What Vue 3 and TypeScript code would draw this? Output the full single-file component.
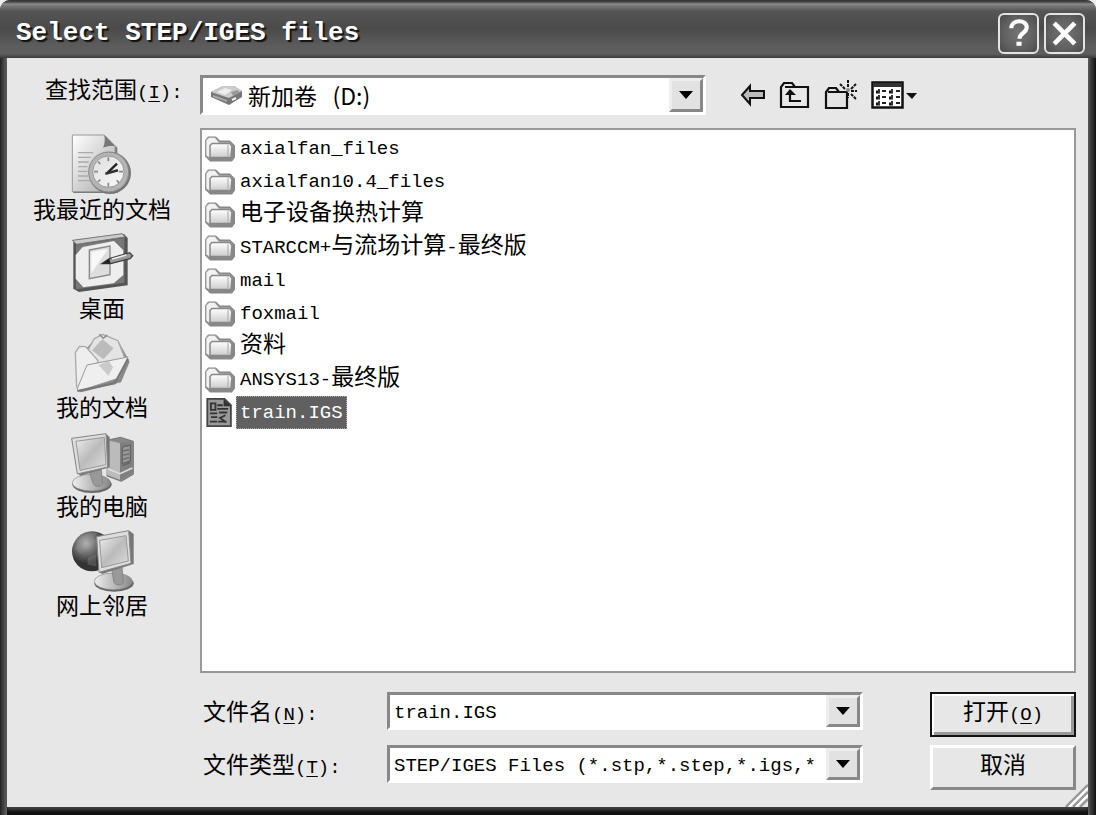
<script setup lang="ts">
import { ref } from 'vue'

interface Entry {
  name: string
  kind: 'folder' | 'file'
}

interface Run {
  text: string
  wide: boolean
}

const entries: Entry[] = [
  { name: 'axialfan_files', kind: 'folder' },
  { name: 'axialfan10.4_files', kind: 'folder' },
  { name: '电子设备换热计算', kind: 'folder' },
  { name: 'STARCCM+与流场计算-最终版', kind: 'folder' },
  { name: 'mail', kind: 'folder' },
  { name: 'foxmail', kind: 'folder' },
  { name: '资料', kind: 'folder' },
  { name: 'ANSYS13-最终版', kind: 'folder' },
  { name: 'train.IGS', kind: 'file' },
]

const places = [
  { id: 'recent', label: '我最近的文档' },
  { id: 'desktop', label: '桌面' },
  { id: 'documents', label: '我的文档' },
  { id: 'computer', label: '我的电脑' },
  { id: 'network', label: '网上邻居' },
]

const selected = ref('train.IGS')
const fileName = ref('train.IGS')

// Splits a name into Chinese and Latin runs, which are set at different sizes.
function runs(name: string): Run[] {
  return (name.match(/[\u4e00-\u9fff]+|[^\u4e00-\u9fff]+/g) ?? []).map((text) => ({
    text,
    wide: /[\u4e00-\u9fff]/.test(text),
  }))
}

function pick(entry: Entry) {
  selected.value = entry.name
  if (entry.kind === 'file') fileName.value = entry.name
}
</script>

<template>
  <div class="window">
    <header class="titlebar">
      <h1>Select STEP/IGES files</h1>
      <button class="caption" type="button" aria-label="Help">
        <svg viewBox="0 0 36 36"><path d="M11 13c0-9 15-9 15-1 0 6-7 5-7 11" fill="none" stroke="#fff" stroke-width="4" /><rect x="16" y="26" width="5" height="4" fill="#fff" /></svg>
      </button>
      <button class="caption" type="button" aria-label="Close">
        <svg viewBox="0 0 36 36"><path d="M8 8L28 28M28 8L8 28" fill="none" stroke="#fff" stroke-width="4.5" /></svg>
      </button>
    </header>

    <main class="body">
      <label class="look-label" for="look-in"><span class="cjk">查找范围</span>(<u>I</u>):</label>
      <div class="toolbar">
        <div class="combo look">
          <svg class="drive" viewBox="0 0 34 22">
            <path d="M1 8l12-6h11l8 5v6l-13 8L1 13z" fill="#777" />
            <path d="M1 8l12-6h11l8 5-13 7z" fill="#ccc" />
            <path d="M7 8l8-4 7 2-7 5z" fill="#eee" />
            <path d="M21 8l6-2 3 2-7 4z" fill="#999" />
            <path d="M3 11l14 5v2L3 13z" fill="#aaa" />
            <path d="M22 16l4-2" stroke="#eee" stroke-width="2" />
          </svg>
          <select id="look-in" class="cjk">
            <option>新加卷&nbsp;&nbsp; (D:)</option>
          </select>
          <span class="arrow"><svg viewBox="0 0 14 8"><path d="M0 0h14L7 8z" /></svg></span>
        </div>
        <div class="tools">
          <button type="button" aria-label="Back">
            <svg width="26" height="26" viewBox="0 0 26 26"><path d="M2 13l8-9v5h14v7H10v6z" fill="#bbb" stroke="#111" stroke-width="2" /></svg>
          </button>
          <button type="button" aria-label="Up one level">
            <svg width="32" height="28" viewBox="0 0 32 28"><path d="M2 26V6l3-4h8l3 4h13v20z" fill="#e8e8e8" stroke="#111" stroke-width="2.2" /><path d="M6 6h10" stroke="#111" stroke-width="2" /><path d="M11 11v9h11" fill="none" stroke="#111" stroke-width="2.2" /><path d="M6 14l5-6 6 6z" fill="#111" /></svg>
          </button>
          <button type="button" aria-label="New folder">
            <svg width="34" height="32" viewBox="0 0 34 32"><path d="M2 29V13l3-4h7l3 4h8v16z" fill="#e4e4e4" stroke="#111" stroke-width="2.2" /><path d="M4 13h12" stroke="#111" stroke-width="2" /><path d="M24 1v7M24 14v5M16 5l5 5M32 5l-5 5M27 12h6M27 15l5 5" fill="none" stroke="#111" stroke-width="2" stroke-dasharray="3 1" /><circle cx="24" cy="11" r="2" fill="#888" /></svg>
          </button>
          <button type="button" aria-label="View menu">
            <svg width="46" height="28" viewBox="0 0 46 28"><path d="M1.500 1.500h30v25h-30z" fill="#fff" stroke="#111" stroke-width="2.500" /><path d="M2 2h29v4H2z" fill="#333" /><path d="M5 11h4M5 17h4M5 23h4M18 11h4M18 17h4M18 23h4" stroke="#111" stroke-width="3" /><path d="M8 8v4M8 14v4M8 20v4M21 8v4M21 14v4M21 20v4" stroke="#333" stroke-width="2" /><path d="M11 10h4M11 16h4M11 22h4M25 10h4M25 16h4M25 22h4" stroke="#222" stroke-width="2" /><path d="M35 12h11l-5 6z" fill="#111" /></svg>
          </button>
        </div>
      </div>

      <nav class="places">
        <button v-for="place in places" :key="place.id" class="place" type="button">
          <svg v-if="place.id === 'recent'" viewBox="150 21 192 192">
            <defs>
              <linearGradient id="paper" x1="0" y1="0" x2="1" y2="1"><stop offset="0" stop-color="#fff" /><stop offset="1" stop-color="#aaa" /></linearGradient>
              <linearGradient id="face" x1="0" y1="0" x2="1" y2="1"><stop offset="0" stop-color="#ddd" /><stop offset="1" stop-color="#fafafa" /></linearGradient>
            </defs>
            <path d="M160 34h98l34 34v136H160z" fill="#777" />
            <path d="M157 30h96l32 34v136H157z" fill="url(#paper)" stroke="#999" stroke-width="3" />
            <path d="M252 30c4 12 3 26-3 38 12-5 24-6 36-4z" fill="#777" />
            <path d="M174 83h46M174 97h38M174 111h32M174 125h28M174 139h28M174 153h30M174 167h38" stroke="#aaa" stroke-width="4" />
            <circle cx="270" cy="144" r="63" fill="#777" />
            <circle cx="266" cy="141" r="60" fill="#b4b4b4" stroke="#888" stroke-width="3" />
            <circle cx="265" cy="140" r="47" fill="url(#face)" stroke="#999" stroke-width="3" />
            <path d="M265 97v12M265 173v12M222 140h12M297 140h12M234 110l7 7M290 166l7 7M234 171l7-7" stroke="#888" stroke-width="5" />
            <path d="M263 143l28-27" stroke="#222" stroke-width="7" /><path d="M256 146l38-10" stroke="#333" stroke-width="8" />
          </svg>
          <svg v-else-if="place.id === 'desktop'" viewBox="150 318 192 192">
            <path d="M160 350l152-23 11 12v142l-146 20-17-10z" fill="#555" />
            <path d="M157 346l150-20 8 10-145 22z" fill="#ccc" stroke="#777" stroke-width="3" />
            <path d="M168 359l145-20v134l-145 20z" fill="#777" />
            <path d="M188 366l94-18 28 28v74l-29 25-91 12-23-26v-71z" fill="#eee" />
            <path d="M208 375l62-12v86l-62 12z" fill="#ddd" stroke="#888" stroke-width="4" />
            <path d="M214 381l50-9-50 73z" fill="#f8f8f8" />
            <path d="M246 416l22-15 61-18 9 9-8 9-58 15z" fill="#999" stroke="#444" stroke-width="4" />
            <path d="M246 416l22-15 4 15z" fill="#222" /><path d="M276 402l43-12" stroke="#eee" stroke-width="4" />
          </svg>
          <svg v-else-if="place.id === 'documents'" viewBox="150 15 192 192">
            <path d="M174 194l-3-100 10-28 20 2 14-15 35-23 46 20 28 51 5 9-26 62-120 30z" fill="#888" />
            <path d="M202 79l20-37 26-14 46 19 20 51-33 52-66-4z" fill="#e4e4e4" stroke="#aaa" stroke-width="4" />
            <path d="M247 43l34 27-31 33-34-27z" fill="#bbb" /><path d="M238 28l12 12 12-10" fill="none" stroke="#888" stroke-width="4" />
            <path d="M166 83l12-19 19 1 37 42-16 51-40 34-8-6z" fill="#eee" stroke="#aaa" stroke-width="4" />
            <path d="M171 193l30-73 123-24-27 63-120 39z" fill="#efefef" stroke="#999" stroke-width="3" />
            <path d="M236 120l30-12 13 19-14 25z" fill="#bbb" opacity=".7" />
            <path d="M172 198l112-23 40-74" fill="none" stroke="#777" stroke-width="6" />
          </svg>
          <svg v-else-if="place.id === 'computer'" viewBox="150 12 192 192">
            <defs>
              <linearGradient id="screen" x1="0" y1="0" x2="1" y2="1"><stop offset="0" stop-color="#eee" /><stop offset=".5" stop-color="#bbb" /><stop offset="1" stop-color="#ddd" /></linearGradient>
              <linearGradient id="stand"><stop offset="0" stop-color="#eee" /><stop offset="1" stop-color="#888" /></linearGradient>
            </defs>
            <path d="M264 45l38-8 38 12v99l-36 21-43-16z" fill="#888" stroke="#777" stroke-width="3" />
            <path d="M264 46l36 9v109l-39-14z" fill="#bbb" /><path d="M300 54l37-6v98l-37 19z" fill="#808080" />
            <path d="M307 66l24-6v48l-24 8zM307 122l24-9" fill="#999" stroke="#666" stroke-width="4" /><path d="M310 78l17-4M310 91l17-5M310 103l17-5" stroke="#666" stroke-width="4" />
            <path d="M264 132l36 14 37-17" stroke="#ddd" stroke-width="5" fill="none" />
            <ellipse cx="216" cy="178" rx="59" ry="26" fill="#666" /><ellipse cx="214" cy="173" rx="57" ry="25" fill="url(#stand)" stroke="#888" stroke-width="2" />
            <path d="M207 139l37-5 4 42c-8 12-23 9-28 0z" fill="#999" stroke="#777" stroke-width="2" />
            <path d="M155 41l104-14 10 10v90l-88 25-9-9z" fill="#777" />
            <path d="M155 40l103-14 5 100-91 21z" fill="#ddd" stroke="#888" stroke-width="3" />
            <path d="M168 49l85-12 5 82-78 17z" fill="url(#screen)" stroke="#999" stroke-width="3" />
          </svg>
          <svg v-else viewBox="150 309 192 192">
            <defs><radialGradient id="globe" cx=".35" cy=".3"><stop offset="0" stop-color="#bbb" /><stop offset=".45" stop-color="#777" /><stop offset="1" stop-color="#333" /></radialGradient></defs>
            <circle cx="216" cy="379" r="60" fill="url(#globe)" />
            <path d="M178 340c15-15 34-20 54-15l-12 13 10 13-28 12-19 23-18-13zM204 399l25-11v36l-27-5z" fill="#999" opacity=".3" />
            <ellipse cx="282" cy="475" rx="59" ry="25" fill="#666" /><ellipse cx="280" cy="469" rx="57" ry="25" fill="url(#stand)" stroke="#888" stroke-width="2" />
            <path d="M274 429l32-6 4 49c-8 12-23 9-28 0z" fill="#999" stroke="#777" stroke-width="2" />
            <path d="M230 336l98-19 13 10v90l-95 30-9-7z" fill="#777" />
            <path d="M230 335l96-18 7 98-96 27z" fill="#ddd" stroke="#888" stroke-width="3" />
            <path d="M239 346l79-14 7 76-80 20z" fill="url(#screen)" stroke="#999" stroke-width="3" />
          </svg>
          <span>{{ place.label }}</span>
        </button>
      </nav>

      <ul class="files">
        <li v-for="entry in entries" :key="entry.name">
          <button class="entry" type="button" :class="{ selected: entry.name === selected }" @click="pick(entry)">
            <svg v-if="entry.kind === 'folder'" viewBox="0 0 32 28">
              <defs><linearGradient id="front" x1="0" y1="0" x2="0" y2="1"><stop offset="0" stop-color="#fff" /><stop offset="1" stop-color="#ccc" /></linearGradient></defs>
              <path d="M5 26L1 22V6l3-4h8l4 4h10l5 5v12l-3 4H6z" fill="#888" />
              <path d="M2 21V6l3-3h6l4 5h11l2 3-2 12H5z" fill="#f2f2f2" stroke="#aaa" />
              <path d="M6 11l2-2h18l2 3-1 11H6z" fill="url(#front)" stroke="#888" stroke-width="1.500" />
              <path d="M24 10v12" stroke="#aaa" />
            </svg>
            <svg v-else viewBox="0 0 32 32">
              <path d="M2 1h19l7 7v23H2z" fill="#999" stroke="#444" stroke-width="2" /><path d="M20 1v8h8z" fill="#333" />
              <path d="M6 6h5v7H6zM13 8h6M13 12h12M5 17h8M15 16h9M6 21h7M5 26h8M22 19l-6 3 7 5M14 26h9" fill="none" stroke="#333" stroke-width="2" />
            </svg>
            <span class="name"><span v-for="(run, i) in runs(entry.name)" :key="i" :class="{ cjk: run.wide }">{{ run.text }}</span></span>
          </button>
        </li>
      </ul>

      <form class="form" @submit.prevent>
        <label for="file-name"><span class="cjk">文件名</span>(<u>N</u>):</label>
        <div class="combo">
          <input id="file-name" v-model="fileName" type="text" />
          <button class="arrow" type="button" aria-label="Recent names"><svg viewBox="0 0 14 8"><path d="M0 0h14L7 8z" /></svg></button>
        </div>
        <button class="action default" type="submit"><span class="cjk">打开</span>(<u>O</u>)</button>
        <label for="file-type"><span class="cjk">文件类型</span>(<u>T</u>):</label>
        <div class="combo">
          <select id="file-type">
            <option>STEP/IGES Files (*.stp,*.step,*.igs,*</option>
          </select>
          <span class="arrow"><svg viewBox="0 0 14 8"><path d="M0 0h14L7 8z" /></svg></span>
        </div>
        <button class="action" type="button"><span class="cjk">取消</span></button>
      </form>
      <svg class="grip" viewBox="0 0 24 24"><path d="M2 24L24 2M9 24L24 9M16 24l8-8" stroke="#999" stroke-width="2.500" /><path d="M5 24L24 5M12 24l12-12" stroke="#fff" stroke-width="2" /></svg>
    </main>
  </div>
</template>

<style>
body {
  margin: 0;
  background: #eee;
}
</style>

<style scoped>
* {
  box-sizing: border-box;
}

.window {
  display: flex;
  flex-direction: column;
  min-height: 100vh;
  padding: 0 8px 8px 7px;
  border-radius: 10px 10px 0 0;
  background: linear-gradient(90deg, #222, #666 7px, #666 calc(100% - 8px), #444 calc(100% - 6px), #111);
  color: #000;
  font-family: "Liberation Mono", "Noto Sans CJK SC", monospace;
  font-size: 19px;
}

.titlebar {
  display: flex;
  align-items: center;
  gap: 8px;
  height: 58px;
  margin: 0 -8px 0 -7px;
  padding: 8px 11px 0 16px;
  border-radius: 10px 10px 0 0;
  background: linear-gradient(#333, #484848 2px, #8c8c8c 4px, #777 6px, #555 11px, #4a4a4a 28px, #5c5c5c 46px, #5e5e5e 54px, #3c3c3c);
}

h1 {
  flex: 1;
  margin: 0;
  color: #fff;
  font-size: 26px;
  line-height: 32px;
  text-shadow: 2px 2px 1px #111;
}

button {
  margin: 0;
  padding: 0;
  border: 0;
  background: none;
  color: inherit;
  font: inherit;
}

svg {
  display: block;
  flex: none;
}

.caption {
  width: 41px;
  height: 41px;
  margin-right: -3px;
  border: 2px solid #e4e4e4;
  border-radius: 6px;
  background: radial-gradient(#747474, #606060 60%, #4a4a4a);
}

.caption:last-child {
  margin-right: 0;
}

/* No line height of its own, so the Latin text sets every baseline. */
.cjk {
  font-family: "Noto Sans CJK SC", sans-serif;
  font-size: 23px;
  line-height: 0;
}

u {
  text-underline-offset: 3px;
}

.body {
  position: relative;
  flex: 1;
  display: grid;
  grid-template-columns: 190px minmax(0, 1fr);
  grid-template-rows: 70px minmax(0, 1fr) auto;
  column-gap: 3px;
  padding: 0 12px 16px 0;
  background: #e7e7e7;
  box-shadow: 0 3px 3px #444, 0 8px 0 #111;
}

.look-label {
  padding: 18px 0 0 38px;
  line-height: 34px;
  white-space: nowrap;
}

.toolbar {
  display: flex;
  align-items: flex-start;
  gap: 34px;
  padding-top: 17px;
}

.combo {
  display: flex;
  align-items: stretch;
  height: 38px;
  min-width: 0;
  border: 3px solid;
  border-color: #888 #fff #fff #888;
  background: #fff;
}

.combo.look {
  flex: 0 1 506px;
  height: 40px;
}

.drive {
  align-self: center;
  width: 34px;
  height: 22px;
  margin-left: 7px;
}

input,
select {
  flex: 1;
  min-width: 0;
  padding: 4px 0 0 4px;
  border: 0;
  outline: 0;
  appearance: none;
  background: transparent;
  color: #000;
  font-family: inherit;
  font-size: 19px;
}

select.cjk {
  padding-top: 0;
  font-family: "Noto Sans CJK SC", sans-serif;
  font-size: 23px;
  line-height: 32px;
}

.arrow {
  display: grid;
  place-items: center;
  width: 34px;
  border: 3px solid;
  border-color: #eee #888 #888 #eee;
  background: #e2e2e2;
  pointer-events: none;
}

.arrow svg {
  width: 14px;
  height: 8px;
}

.tools {
  display: flex;
  align-items: center;
  gap: 13px;
  height: 40px;
}

.places {
  display: flex;
  flex-direction: column;
  gap: 11px;
  padding-top: 4px;
}

.place {
  display: flex;
  flex-direction: column;
  align-items: center;
  font-family: "Noto Sans CJK SC", sans-serif;
  font-size: 23px;
  line-height: 24px;
}

.place svg {
  width: 64px;
  height: 64px;
}

.files {
  margin: 0;
  padding: 2px;
  border: 2px solid #999;
  background: #fff;
  list-style: none;
}

.entry {
  display: flex;
  align-items: center;
  height: 33px;
}

.entry svg {
  width: 32px;
  height: 29px;
}

.name {
  display: block;
  height: 33px;
  padding: 0 4px;
  line-height: 34px;
  white-space: pre;
}

.selected .name {
  background: #606060;
  color: #fff;
  outline: 1px dotted #aaa;
  outline-offset: -1px;
}

.form {
  grid-column: 2;
  display: grid;
  grid-template-columns: 187px minmax(0, 476fr) minmax(0, 67fr) 146px;
  row-gap: 7px;
  padding: 19px 0 0;
}

.form label {
  padding-left: 3px;
  line-height: 46px;
  white-space: nowrap;
}

.action {
  grid-column: 4;
  height: 45px;
  border: 3px solid;
  border-color: #fff #888 #888 #fff;
  background: #e7e7e7;
  line-height: 36px;
}

.default {
  border: 2px solid #111;
  box-shadow: inset 2px 2px #fff, inset -3px -3px #999;
}

.grip {
  position: absolute;
  right: 0;
  bottom: 0;
  width: 24px;
  height: 24px;
}
</style>
